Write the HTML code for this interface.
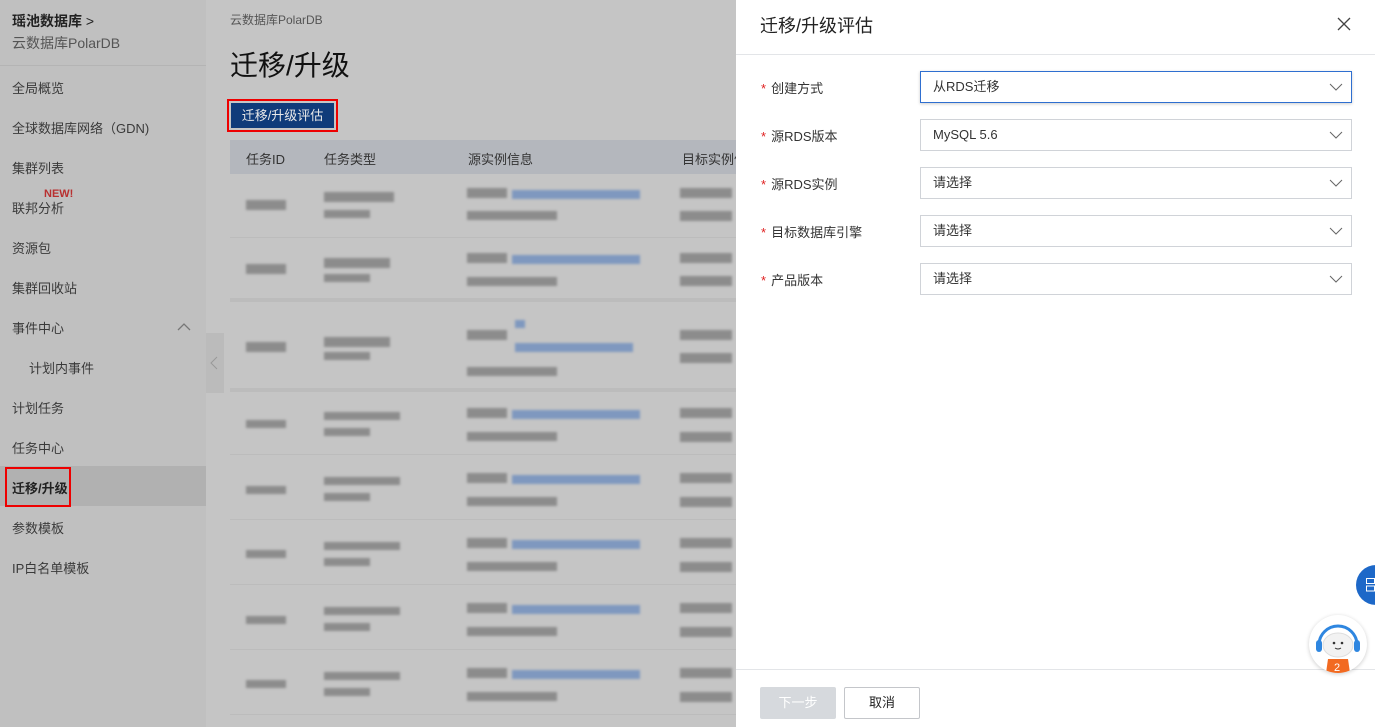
<!DOCTYPE html>
<html><head><meta charset="utf-8"><style>
*{margin:0;padding:0;box-sizing:border-box}
body{width:1375px;height:727px;overflow:hidden;position:relative;font-family:"Liberation Sans","Noto Sans CJK SC",sans-serif;background:#c5c5c5;color:#2b2b2b}
.a{position:absolute}
.side{left:0;top:0;width:206px;height:727px;background:#c0c0c0}
.mi{position:absolute;left:12px;font-size:13px;color:#3a3a3a}
.blk{position:absolute;background:#8c8c8c;filter:blur(1.2px)}
.bl{position:absolute;background:#7f98bf;filter:blur(1.2px)}
.row{position:absolute;left:230px;width:506px;border-bottom:1px solid #bcbcbc}
.lab{position:absolute;left:761px;font-size:13px;color:#333}
.lab b{color:#e02020;font-weight:normal;margin-right:5px}
.sel{position:absolute;left:920px;width:432px;height:32px;border:1px solid #d0d3d8;background:#fff;font-size:13px;color:#333;padding:0 12px;line-height:30px}
.sel svg{position:absolute;right:8px;top:11px}
</style></head><body>
<div class="a side">
<div class="a" style="left:12px;top:11px;font-size:14px;font-weight:bold;color:#222">瑶池数据库 <span style="font-weight:normal">&gt;</span></div>
<div class="a" style="left:12px;top:33px;font-size:14px;color:#555">云数据库PolarDB</div>
<div class="a" style="left:0;top:65px;width:206px;height:1px;background:#b4b4b4"></div>
<div class="mi" style="top:78px">全局概览</div>
<div class="mi" style="top:118px">全球数据库网络（GDN)</div>
<div class="mi" style="top:158px">集群列表</div>
<div class="a" style="left:44px;top:188px;font-size:11px;font-weight:bold;color:#b83030">NEW!</div>
<div class="mi" style="top:198px">联邦分析</div>
<div class="mi" style="top:238px">资源包</div>
<div class="mi" style="top:278px">集群回收站</div>
<div class="mi" style="top:318px">事件中心</div>
<svg class="a" style="left:177px;top:322px" width="14" height="9"><path d="M1 8L7 2L13 8" stroke="#777" fill="none" stroke-width="1.3"/></svg>
<div class="mi" style="top:358px;left:29px">计划内事件</div>
<div class="mi" style="top:398px">计划任务</div>
<div class="mi" style="top:438px">任务中心</div>
<div class="a" style="left:0;top:466px;width:206px;height:40px;background:#b1b1b1"></div>
<div class="mi" style="top:478px;font-weight:bold;color:#222">迁移/升级</div>
<div class="a" style="left:5px;top:467px;width:66px;height:40px;border:2px solid #e00"></div>
<div class="mi" style="top:518px">参数模板</div>
<div class="mi" style="top:558px">IP白名单模板</div>
</div>
<div class="a" style="left:206px;top:333px;width:18px;height:60px;background:#bbbbbb"></div>
<svg class="a" style="left:210px;top:356px" width="8" height="14"><path d="M7 1L1 7L7 13" stroke="#999" fill="none"/></svg>
<div class="a" style="left:230px;top:11px;font-size:12px;color:#555">云数据库PolarDB</div>
<div class="a" style="left:230px;top:44px;font-size:28px;color:#111">迁移/升级</div>
<div class="a" style="left:227px;top:99px;width:111px;height:33px;border:2px solid #e00;padding:2px"><div style="background:#0f3b7a;color:#e8e8e8;font-size:13px;height:25px;line-height:25px;text-align:center">迁移/升级评估</div></div>
<div class="a" style="left:230px;top:140px;width:506px;height:34px;background:#b4b7bd;font-size:13px;color:#333;overflow:hidden;white-space:nowrap">
<span class="a" style="left:16px;top:9px">任务ID</span><span class="a" style="left:94px;top:9px">任务类型</span><span class="a" style="left:238px;top:9px">源实例信息</span><span class="a" style="left:452px;top:9px">目标实例信息</span></div>
<div class="row" style="top:174px;height:64px"></div>
<div class="row" style="top:238px;height:64px;border-bottom:4px solid #bcbcbc"></div>
<div class="row" style="top:302px;height:90px;border-bottom:4px solid #bcbcbc"></div>
<div class="row" style="top:392px;height:63px"></div>
<div class="row" style="top:455px;height:65px"></div>
<div class="row" style="top:520px;height:65px"></div>
<div class="row" style="top:585px;height:65px"></div>
<div class="row" style="top:650px;height:65px"></div>
<div class="blk" style="left:246px;top:200px;width:40px;height:10px"></div>
<div class="blk" style="left:324px;top:192px;width:70px;height:10px"></div><div class="blk" style="left:324px;top:210px;width:46px;height:8px"></div>
<div class="blk" style="left:467px;top:188px;width:40px;height:10px"></div><div class="bl" style="left:512px;top:190px;width:128px;height:9px"></div><div class="blk" style="left:467px;top:211px;width:90px;height:9px"></div>
<div class="blk" style="left:680px;top:188px;width:52px;height:10px"></div><div class="blk" style="left:680px;top:211px;width:52px;height:10px"></div>
<div class="blk" style="left:246px;top:264px;width:40px;height:10px"></div>
<div class="blk" style="left:324px;top:258px;width:66px;height:10px"></div><div class="blk" style="left:324px;top:274px;width:46px;height:8px"></div>
<div class="blk" style="left:467px;top:253px;width:40px;height:10px"></div><div class="bl" style="left:512px;top:255px;width:128px;height:9px"></div><div class="blk" style="left:467px;top:277px;width:90px;height:9px"></div>
<div class="blk" style="left:680px;top:253px;width:52px;height:10px"></div><div class="blk" style="left:680px;top:276px;width:52px;height:10px"></div>
<div class="blk" style="left:246px;top:342px;width:40px;height:10px"></div>
<div class="blk" style="left:324px;top:337px;width:66px;height:10px"></div><div class="blk" style="left:324px;top:352px;width:46px;height:8px"></div>
<div class="blk" style="left:467px;top:330px;width:40px;height:10px"></div><div class="bl" style="left:515px;top:320px;width:10px;height:8px"></div><div class="bl" style="left:515px;top:343px;width:118px;height:9px"></div><div class="blk" style="left:467px;top:367px;width:90px;height:9px"></div>
<div class="blk" style="left:680px;top:330px;width:52px;height:10px"></div><div class="blk" style="left:680px;top:353px;width:52px;height:10px"></div>
<div class="blk" style="left:246px;top:420px;width:40px;height:8px"></div>
<div class="blk" style="left:324px;top:412px;width:76px;height:8px"></div><div class="blk" style="left:324px;top:428px;width:46px;height:8px"></div>
<div class="blk" style="left:467px;top:408px;width:40px;height:10px"></div><div class="bl" style="left:512px;top:410px;width:128px;height:9px"></div><div class="blk" style="left:467px;top:432px;width:90px;height:9px"></div>
<div class="blk" style="left:680px;top:408px;width:52px;height:10px"></div><div class="blk" style="left:680px;top:432px;width:52px;height:10px"></div>
<div class="blk" style="left:246px;top:486px;width:40px;height:8px"></div>
<div class="blk" style="left:324px;top:477px;width:76px;height:8px"></div><div class="blk" style="left:324px;top:493px;width:46px;height:8px"></div>
<div class="blk" style="left:467px;top:473px;width:40px;height:10px"></div><div class="bl" style="left:512px;top:475px;width:128px;height:9px"></div><div class="blk" style="left:467px;top:497px;width:90px;height:9px"></div>
<div class="blk" style="left:680px;top:473px;width:52px;height:10px"></div><div class="blk" style="left:680px;top:497px;width:52px;height:10px"></div>
<div class="blk" style="left:246px;top:550px;width:40px;height:8px"></div>
<div class="blk" style="left:324px;top:542px;width:76px;height:8px"></div><div class="blk" style="left:324px;top:558px;width:46px;height:8px"></div>
<div class="blk" style="left:467px;top:538px;width:40px;height:10px"></div><div class="bl" style="left:512px;top:540px;width:128px;height:9px"></div><div class="blk" style="left:467px;top:562px;width:90px;height:9px"></div>
<div class="blk" style="left:680px;top:538px;width:52px;height:10px"></div><div class="blk" style="left:680px;top:562px;width:52px;height:10px"></div>
<div class="blk" style="left:246px;top:616px;width:40px;height:8px"></div>
<div class="blk" style="left:324px;top:607px;width:76px;height:8px"></div><div class="blk" style="left:324px;top:623px;width:46px;height:8px"></div>
<div class="blk" style="left:467px;top:603px;width:40px;height:10px"></div><div class="bl" style="left:512px;top:605px;width:128px;height:9px"></div><div class="blk" style="left:467px;top:627px;width:90px;height:9px"></div>
<div class="blk" style="left:680px;top:603px;width:52px;height:10px"></div><div class="blk" style="left:680px;top:627px;width:52px;height:10px"></div>
<div class="blk" style="left:246px;top:680px;width:40px;height:8px"></div>
<div class="blk" style="left:324px;top:672px;width:76px;height:8px"></div><div class="blk" style="left:324px;top:688px;width:46px;height:8px"></div>
<div class="blk" style="left:467px;top:668px;width:40px;height:10px"></div><div class="bl" style="left:512px;top:670px;width:128px;height:9px"></div><div class="blk" style="left:467px;top:692px;width:90px;height:9px"></div>
<div class="blk" style="left:680px;top:668px;width:52px;height:10px"></div><div class="blk" style="left:680px;top:692px;width:52px;height:10px"></div>
<div class="a" style="left:736px;top:0;width:639px;height:727px;background:#fff">
<div class="a" style="left:24px;top:12px;font-size:18px;color:#222">迁移/升级评估</div>
<svg class="a" style="left:601px;top:17px" width="14" height="14"><path d="M1 1L13 13M13 1L1 13" stroke="#444" stroke-width="1.3"/></svg>
<div class="a" style="left:0;top:54px;width:639px;height:1px;background:#e3e5e8"></div>
<div class="a" style="left:0;top:669px;width:639px;height:1px;background:#e3e5e8"></div>
<div class="a" style="left:24px;top:687px;width:76px;height:32px;background:#d6d9dd;border-radius:2px;color:#fff;font-size:13px;text-align:center;line-height:32px">下一步</div>
<div class="a" style="left:108px;top:687px;width:76px;height:32px;border:1px solid #c4c6ca;border-radius:2px;color:#222;font-size:13px;text-align:center;line-height:30px">取消</div>
</div>
<div class="lab" style="top:78px"><b>*</b>创建方式</div>
<div class="lab" style="top:126px"><b>*</b>源RDS版本</div>
<div class="lab" style="top:174px"><b>*</b>源RDS实例</div>
<div class="lab" style="top:222px"><b>*</b>目标数据库引擎</div>
<div class="lab" style="top:270px"><b>*</b>产品版本</div>
<div class="sel" style="top:71px;border-color:#2f6fd0;box-shadow:0 1px 3px rgba(0,0,0,.2)">从RDS迁移<svg width="14" height="9"><path d="M1 1L7 7L13 1" stroke="#666" fill="none"/></svg></div>
<div class="sel" style="top:119px">MySQL 5.6<svg width="14" height="9"><path d="M1 1L7 7L13 1" stroke="#666" fill="none"/></svg></div>
<div class="sel" style="top:167px">请选择<svg width="14" height="9"><path d="M1 1L7 7L13 1" stroke="#666" fill="none"/></svg></div>
<div class="sel" style="top:215px">请选择<svg width="14" height="9"><path d="M1 1L7 7L13 1" stroke="#666" fill="none"/></svg></div>
<div class="sel" style="top:263px">请选择<svg width="14" height="9"><path d="M1 1L7 7L13 1" stroke="#666" fill="none"/></svg></div>
<div class="a" style="left:1356px;top:565px;width:40px;height:40px;border-radius:50%;background:#1d68c8"></div>
<svg class="a" style="left:1366px;top:578px" width="10" height="14"><rect x="0.5" y="0.5" width="8" height="5" fill="none" stroke="#fff"/><rect x="0.5" y="8" width="8" height="5" fill="none" stroke="#fff"/></svg>
<div class="a" style="left:1309px;top:615px;width:58px;height:58px;border-radius:50%;background:#fff;box-shadow:0 1px 4px rgba(0,0,0,.2);overflow:hidden">
<svg width="58" height="58"><path d="M10 30A19 19 0 0 1 48 30" stroke="#2e86e0" stroke-width="3" fill="none"/><ellipse cx="29" cy="30" rx="15" ry="12" fill="#f2f2f2" stroke="#ddd"/><rect x="7" y="25" width="6" height="12" rx="3" fill="#2e86e0"/><rect x="45" y="25" width="6" height="12" rx="3" fill="#2e86e0"/><circle cx="25" cy="28" r="1.3" fill="#333"/><circle cx="33" cy="28" r="1.3" fill="#333"/><path d="M26 33Q29 35 32 33" stroke="#333" fill="none"/><path d="M17 58L19 44H39L41 58Z" fill="#f26a21"/><text x="25" y="56" font-size="11" fill="#fff" font-family="Liberation Sans">2</text></svg></div>
</body></html>
